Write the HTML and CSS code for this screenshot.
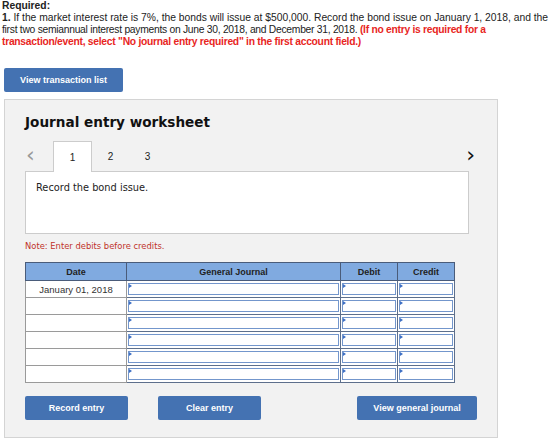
FILE: index.html
```html
<!DOCTYPE html>
<html lang="en">
<head>
  <meta charset="utf-8">
  <title>Journal entry worksheet</title>
  <link rel="stylesheet" href="styles.css">
</head>
<body>
  <!-- question text -->
  <div class="question">
    <div class="line"><b>Required:</b></div>
    <div class="line"><b>1.</b> If the market interest rate is 7%, the bonds will issue at $500,000. Record the bond issue on January 1, 2018, and the</div>
    <div class="line tight">first two semiannual interest payments on June 30, 2018, and December 31, 2018. <span class="warn">(If no entry is required for a</span></div>
    <div class="line tight"><span class="warn">transaction/event, select "No journal entry required" in the first account field.)</span></div>
  </div>

  <button class="btn btn-list">View transaction list</button>

  <!-- worksheet -->
  <div class="panel">
    <h2>Journal entry worksheet</h2>

    <div class="tabs">
      <span class="arrow prev">&lsaquo;</span>
      <span class="tab active">1</span>
      <span class="tab">2</span>
      <span class="tab">3</span>
      <span class="arrow next">&rsaquo;</span>
    </div>

    <div class="desc">Record the bond issue.</div>

    <p class="note">Note: Enter debits before credits.</p>

    <table class="journal">
      <tr>
        <th class="c-date">Date</th>
        <th class="c-acct">General Journal</th>
        <th class="c-num">Debit</th>
        <th class="c-num">Credit</th>
      </tr>
      <tr>
        <td class="date">January 01, 2018</td>
        <td class="field"><div></div></td>
        <td class="field"><div></div></td>
        <td class="field"><div></div></td>
      </tr>
      <tr>
        <td class="date"></td>
        <td class="field"><div></div></td>
        <td class="field"><div></div></td>
        <td class="field"><div></div></td>
      </tr>
      <tr>
        <td class="date"></td>
        <td class="field"><div></div></td>
        <td class="field"><div></div></td>
        <td class="field"><div></div></td>
      </tr>
      <tr>
        <td class="date"></td>
        <td class="field"><div></div></td>
        <td class="field"><div></div></td>
        <td class="field"><div></div></td>
      </tr>
      <tr>
        <td class="date"></td>
        <td class="field"><div></div></td>
        <td class="field"><div></div></td>
        <td class="field"><div></div></td>
      </tr>
      <tr>
        <td class="date"></td>
        <td class="field"><div></div></td>
        <td class="field"><div></div></td>
        <td class="field"><div></div></td>
      </tr>
    </table>

    <div class="actions">
      <button class="btn btn-small">Record entry</button>
      <button class="btn btn-small btn-clear">Clear entry</button>
      <button class="btn btn-view">View general journal</button>
    </div>
  </div>
</body>
</html>
```

FILE: styles.css
```css
body {
  font-family: "Liberation Sans", Arial, sans-serif;
  margin: 0;
  padding: 0;
  color: #222;
}

.question {
  padding: 0 0 0 2px;
  font-size: 10.3px;
  line-height: 12px;
}

.question .line {
  white-space: nowrap;
  height: 12px;
}

.question .tight {
  letter-spacing: -0.27px;
}

.warn {
  color: #e8261e;
  font-weight: bold;
}

.btn {
  font-family: "Liberation Sans", Arial, sans-serif;
  font-size: 9px;
  font-weight: bold;
  color: #fff;
  background-color: #4472b2;
  border: none;
  border-radius: 2px;
  cursor: pointer;
  padding: 0;
}

.btn-list {
  display: block;
  margin: 20px 0 0 4px;
  width: 119px;
  height: 24px;
}

.panel {
  margin: 7px 0 0 4px;
  width: 472px;
  padding: 13px 0 17px 20px;
  background: #f2f2f2;
  border: 1px solid #d4d4d4;
}

.panel h2 {
  font-family: "DejaVu Sans", Verdana, sans-serif;
  font-size: 13.6px;
  line-height: 18px;
  margin: 0;
  color: #111;
}

.tabs {
  display: flex;
  align-items: stretch;
  height: 30px;
  margin-top: 10px;
  width: 450px;
  font-size: 10px;
}

.tab {
  width: 37px;
  display: flex;
  align-items: center;
  justify-content: center;
  padding-top: 1px;
}

.tab.active {
  background: #fff;
  border: 1px solid #ccc;
  border-bottom: none;
  margin-bottom: -1px;
  position: relative;
}

.arrow {
  display: flex;
  align-items: center;
  font-size: 22px;
  font-family: "DejaVu Sans", sans-serif;
  padding-bottom: 3px;
}

.prev {
  width: 27px;
  padding-left: 1px;
  color: #999;
}

.next {
  margin-left: auto;
  color: #111;
}

.desc {
  width: 422px;
  height: 41px;
  padding: 10px;
  background: #fff;
  border: 1px solid #ccc;
  font-family: "DejaVu Sans", Verdana, sans-serif;
  font-size: 9.8px;
}

.note {
  font-family: "DejaVu Sans", Verdana, sans-serif;
  font-size: 8.4px;
  color: #c0322a;
  margin: 6px 0 0 0;
  line-height: 12px;
}

.journal {
  border-collapse: collapse;
  margin-top: 10px;
  width: 425px;
  table-layout: fixed;
  font-size: 9px;
}

.journal th {
  background: #80aae0;
  border: 1px solid #4a5c7a;
  height: 17px;
  padding: 0;
  font-weight: bold;
  color: #222;
}

.c-date { width: 100px; }
.c-acct { width: 213px; }
.c-num { width: 56px; }

.journal td {
  height: 14px;
  padding: 0;
  background: #fff;
}

.journal td.date {
  border: 1px solid #9a9a9a;
  text-align: center;
  color: #333;
  font-size: 9.5px;
}

.journal td.field {
  border: 1px solid #5d6f8c;
  padding: 1px;
}

.field div {
  position: relative;
  height: 10px;
  border: 1px solid #7396cc;
}

.field div::before {
  content: "";
  position: absolute;
  left: 0;
  top: 0;
  border-left: 3px solid #3d6fc4;
  border-top: 2px solid transparent;
  border-bottom: 2px solid transparent;
}

.actions {
  display: flex;
  margin-top: 13px;
  width: 452px;
}

.btn-small {
  width: 103px;
  height: 24px;
}

.btn-clear {
  margin-left: 30px;
}

.btn-view {
  margin-left: auto;
  width: 120px;
  height: 24px;
}
```
